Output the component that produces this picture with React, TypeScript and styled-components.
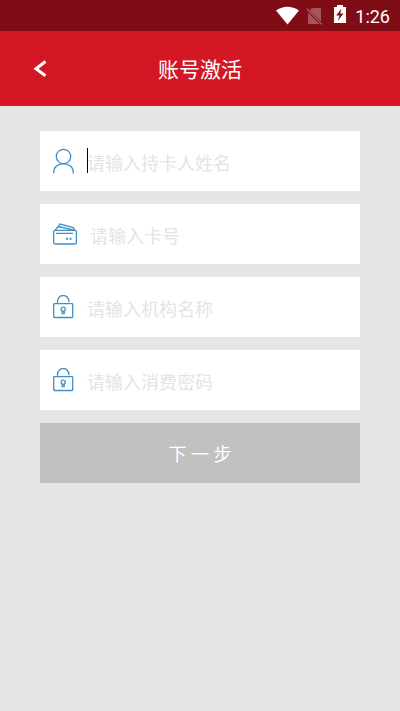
import React from 'react';
import styled, { createGlobalStyle } from 'styled-components';

const GlobalStyle = createGlobalStyle`
  * { box-sizing: border-box; }
  body {
    margin: 0;
    background: #e6e6e6;
    font-family: Roboto, "Noto Sans CJK SC", sans-serif;
  }
`;

const Screen = styled.div`
  display: flex;
  flex-direction: column;
  min-height: 100vh;
  background: #e6e6e6;
`;

const StatusBar = styled.div`
  display: flex;
  align-items: center;
  justify-content: flex-end;
  height: 31px;
  padding-right: 10px;
  background: #7e0d16;
  color: #fff;
`;

const StatusIcons = styled.svg`
  display: block;
  margin-right: 8px;
`;

const Clock = styled.time`
  padding-top: 2px;
  font-size: 18px;
  line-height: 24px;
  font-weight: 400;
`;

const Header = styled.header`
  display: grid;
  grid-template-columns: 80px 1fr 80px;
  align-items: center;
  height: 75px;
  background: #d31725;
`;

const BackButton = styled.button`
  display: flex;
  align-items: center;
  justify-content: center;
  height: 75px;
  padding: 0;
  border: 0;
  background: none;
`;

const Title = styled.h1`
  margin: 0;
  padding-top: 2px;
  color: #fff;
  font-size: 21px;
  line-height: 30px;
  font-weight: 400;
  text-align: center;
`;

const Form = styled.form`
  display: flex;
  flex-direction: column;
  gap: 13px;
  padding: 25px 40px;
`;

const Field = styled.label`
  display: flex;
  align-items: center;
  gap: 13px;
  height: 60px;
  padding: 0 13px;
  background: #fff;

  svg {
    flex: none;
    fill: none;
    stroke: #4390c6;
    stroke-width: 1.3;
  }
`;

const InputBox = styled.span`
  position: relative;
  display: flex;
  flex: 1;
  min-width: 0;
`;

const Caret = styled.span`
  position: absolute;
  top: 2px;
  left: 0;
  width: 1px;
  height: 25px;
  background: #000;
`;

const Input = styled.input`
  width: 100%;
  height: 30px;
  padding: 4px 0 0;
  border: 0;
  outline: 0;
  background: none;
  color: #333;
  font-family: inherit;
  font-size: 18px;
  line-height: 26px;

  &::placeholder {
    color: #e4e4e4;
    opacity: 1;
  }
`;

const SubmitButton = styled.button`
  height: 60px;
  padding: 4px 0 0;
  border: 0;
  background: #c1c1c1;
  color: #fff;
  font-family: inherit;
  font-size: 18px;
  line-height: 26px;
`;

const PersonIcon = () => (
  <svg width="21" height="26" viewBox="0 0 21 26" aria-hidden="true">
    <circle cx="10.5" cy="8.5" r="7.2" />
    <path d="M.8 25.500v-1.500C.8 19 5 15.800 10.500 15.800S20.200 19 20.200 24v1.500" />
  </svg>
);

const CardIcon = () => (
  <svg width="24" height="22" viewBox="0 0 24 22" aria-hidden="true">
    <rect x=".7" y="7.300" width="22.700" height="13.700" rx="1.700" />
    <path d="M3 10.400h17M2 7.300 5.200 3.500l15.500 3.600M5.600 3.500 7 1l13.200 3.500 1.600 2.800M7 3.900l11 2.600" />
    <path d="M13 15.800h2M16.500 15.800h2" strokeWidth="2" />
  </svg>
);

const LockIcon = () => (
  <svg width="21" height="24" viewBox="0 0 21 24" aria-hidden="true">
    <rect x=".7" y="8.700" width="19" height="13.800" rx=".7" />
    <path d="M4.500 8.500V6.200a5.700 5.700 0 0 1 11.400 0v1" />
    <circle cx="10.200" cy="14.200" r="2.100" />
    <path d="M9.200 16.200v2.300h2v-2.300" />
  </svg>
);

const fields = [
  { id: 'holder', label: '请输入持卡人姓名', Icon: PersonIcon, type: 'text', active: true },
  { id: 'card', label: '请输入卡号', Icon: CardIcon, type: 'text', active: false },
  { id: 'org', label: '请输入机构名称', Icon: LockIcon, type: 'text', active: false },
  { id: 'password', label: '请输入消费密码', Icon: LockIcon, type: 'password', active: false },
];

export default function App() {
  return (
    <Screen>
      <GlobalStyle />
      <StatusBar>
        <StatusIcons width="71" height="23" viewBox="0 0 71 23" aria-hidden="true">
          <path d="M0 6.500Q11.500-1 23 6.500L11.500 20.500Z" fill="#fff" />
          <path d="M36 4h9v13.500L33.500 6.300ZM32 8.500l11.500 11.500H32Z" fill="#a6535b" />
          <path d="M30.500 4.500 46 20.500" stroke="#a6535b" strokeWidth="1.500" />
          <path d="M58 3h3V1h6v2h3v16H58Z" fill="#fff" />
          <path d="M65.500 4.500 60.200 11.500h3.300L61.800 17l5.700-7.500h-3.300Z" fill="#7e0d16" />
        </StatusIcons>
        <Clock>1:26</Clock>
      </StatusBar>
      <Header>
        <BackButton type="button" aria-label="返回">
          <svg width="14" height="18" viewBox="0 0 14 18" aria-hidden="true">
            <path d="M12.500 1.500 3 8.800l9.500 7" fill="none" stroke="#fff" strokeWidth="3" />
          </svg>
        </BackButton>
        <Title>账号激活</Title>
      </Header>
      <Form>
        {fields.map(({ id, label, Icon, type, active }) => (
          <Field key={id} htmlFor={id}>
            <Icon />
            <InputBox>
              <Input id={id} type={type} placeholder={label} aria-label={label} />
              {active && <Caret />}
            </InputBox>
          </Field>
        ))}
        <SubmitButton type="button">下 一 步</SubmitButton>
      </Form>
    </Screen>
  );
}
